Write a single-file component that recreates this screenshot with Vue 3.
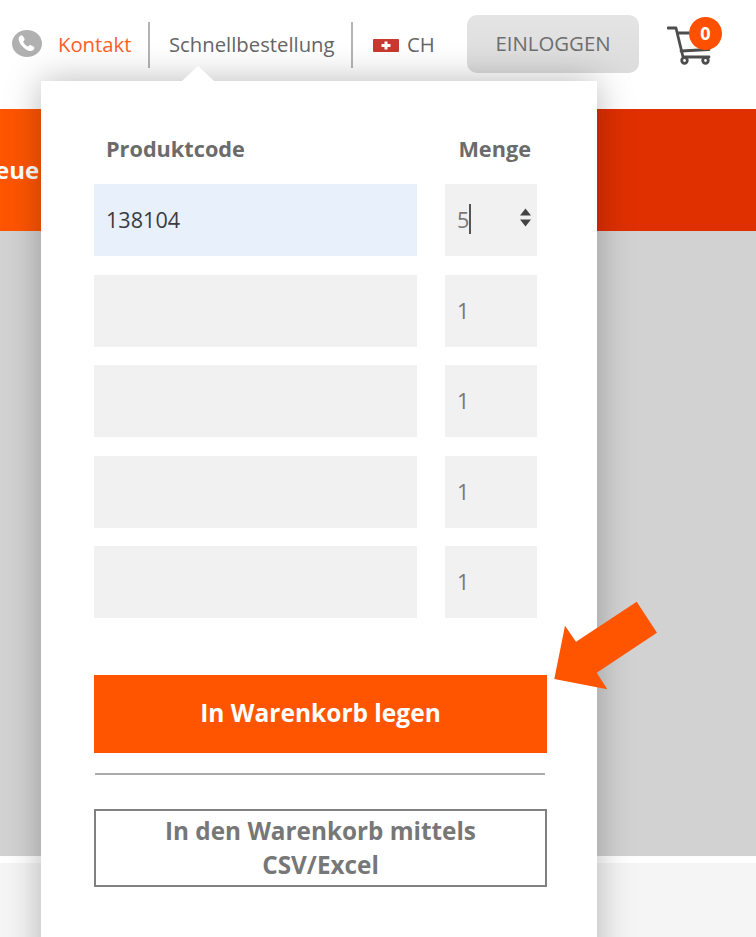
<script setup>
const rows = [
  { code: '138104', qty: '5', active: true },
  { code: '', qty: '1' },
  { code: '', qty: '1' },
  { code: '', qty: '1' },
  { code: '', qty: '1' }
]
</script>

<template>
  <div class="page">
    <header class="top">
      <svg class="phone" viewBox="0 0 30 27" width="30" height="27">
        <ellipse cx="15" cy="13.5" rx="15" ry="13.5" fill="#b0b0b0" />
        <path d="M7.5 6.5c1-1.2 2.6-1.6 3.4-.6l1.6 2.8c.4.8 0 1.4-.9 2.2-.5.4-.5.8-.2 1.4.9 1.6 2.2 3 3.9 4 .6.3 1 .3 1.400-.2.8-.9 1.4-1.3 2.2-.9l3 1.6c.9.7.6 2.2-.6 3.3-1.5 1.3-3.7 1.3-6 .1-3.3-1.7-6.2-4.7-7.8-8-1.1-2.3-1.200-4.400 0-5.700z" fill="#fff" />
      </svg>
      <a class="kontakt">Kontakt</a>
      <span class="sep sep-a"></span>
      <a class="quick">Schnellbestellung</a>
      <span class="sep sep-b"></span>
      <svg class="flag" viewBox="0 0 26 13" width="26" height="13">
        <rect width="26" height="13" rx="1" fill="#c8392f" />
        <path d="M11.5 2.500h3V5h3v3h-3v2.500h-3V8h-3V5h3z" fill="#fff" />
      </svg>
      <span class="lang">CH</span>
      <button class="login">EINLOGGEN</button>
      <div class="cart">
        <svg viewBox="0 0 46 40" width="46" height="40">
          <g fill="none" stroke="#4d4d4d" stroke-linecap="round" stroke-linejoin="round">
            <path d="M1 2h8l7 29h26" stroke-width="2.800" />
            <path d="M11 7h22" stroke-width="2.800" />
            <path d="M14 25l28-1.500" stroke-width="2.800" />
            <circle cx="17.500" cy="34.500" r="2.800" stroke-width="2.800" />
            <circle cx="38.500" cy="34.500" r="2.800" stroke-width="2.800" />
          </g>
        </svg>
        <span class="badge">0</span>
      </div>
    </header>

    <section class="band">
      <span class="band-text">eue</span>
    </section>
    <section class="grey"></section>
    <footer class="foot"></footer>

    <div class="panel">
      <span class="caret"></span>
      <div class="heads">
        <span>Produktcode</span>
        <span>Menge</span>
      </div>
      <div class="rows">
        <div v-for="(row, i) in rows" :key="i" class="row">
          <div class="code" :class="{ active: row.active }">{{ row.code }}</div>
          <div class="qty">
            <span>{{ row.qty }}</span>
            <template v-if="row.active">
              <span class="caret-line"></span>
              <svg class="spin" viewBox="0 0 13 21" width="13" height="21">
                <path d="M6.500 1.500l5.500 7H1zM1 12.500h11l-5.500 7z" fill="#444" />
              </svg>
            </template>
          </div>
        </div>
      </div>
      <button class="add">In Warenkorb legen</button>
      <hr class="rule" />
      <button class="csv">In den Warenkorb mittels<br />CSV/Excel</button>
    </div>

    <svg class="arrow" viewBox="0 0 110 96" width="110" height="96">
      <polygon points="2.300,78 13,24.700 24,40.700 84.700,0.700 105,31.700 44.700,71.700 55.300,88.300" fill="#ff5500" />
    </svg>
  </div>
</template>

<style>
html, body { margin: 0; background: #fff; }
</style>

<style scoped>
.page {
  position: relative;
  width: 756px;
  height: 937px;
  overflow: hidden;
  font-family: "Open Sans", "Noto Sans", sans-serif;
  color: #666;
}
.top {
  height: 110px;
  box-sizing: border-box;
  padding: 15px 0 0 12px;
  display: flex;
  align-items: flex-start;
  background: #fff;
}
.phone { margin-top: 15px; }
.kontakt {
  margin-left: 16px;
  margin-top: 15px;
  width: 73px;
  color: #ff6026;
  font-size: 20.300px;
  line-height: 28px;
  white-space: nowrap;
}
.sep {
  width: 2px;
  height: 46px;
  margin-top: 7px;
  background: #b4b4b4;
}
.sep-a { margin-left: 17px; }
.quick {
  margin-left: 19px;
  margin-top: 15px;
  width: 166px;
  font-size: 20.300px;
  line-height: 28px;
  white-space: nowrap;
}
.sep-b { margin-left: 16px; }
.flag { margin-left: 20px; margin-top: 24px; }
.lang {
  margin-left: 8px;
  margin-top: 15px;
  width: 27px;
  font-size: 20.300px;
  line-height: 28px;
}
.login {
  flex: none;
  margin-left: 33px;
  width: 172px;
  height: 58px;
  padding: 0 0 2px;
  border: 0;
  border-radius: 10px;
  background: linear-gradient(#e4e4e4, #dcdcdc);
  color: #6e6e6e;
  font: 20.400px "Open Sans", sans-serif;
}
.cart {
  position: relative;
  flex: none;
  margin-left: 28px;
  margin-top: 11px;
  width: 46px;
  height: 40px;
}
.badge {
  position: absolute;
  left: 22px;
  top: -9px;
  width: 33px;
  height: 33px;
  border-radius: 50%;
  background: #ff5000;
  color: #fff;
  font-size: 18px;
  font-weight: 700;
  line-height: 33px;
  text-align: center;
}
.band {
  height: 122px;
  margin-top: -1px;
  padding-bottom: 1px;
  box-sizing: border-box;
  display: flex;
  align-items: center;
  background: linear-gradient(90deg, #ff5500 0, #ff5500 41px, #e03000 597px, #e03000 100%);
}
.band-text {
  margin-left: -5px;
  color: #fff;
  font-size: 24px;
  font-weight: 700;
}
.grey { height: 625px; background: #d2d2d2; }
.foot {
  height: 81px;
  border-top: 7px solid #fff;
  box-sizing: border-box;
  background: #f5f5f5;
}
.panel {
  position: absolute;
  left: 41px;
  top: 81px;
  width: 556px;
  height: 900px;
  box-sizing: border-box;
  padding: 52px 50px 0 53px;
  background: #fff;
  box-shadow: 0 0 34px rgba(0, 0, 0, 0.28);
}
.caret {
  position: absolute;
  left: 141px;
  top: -15px;
  width: 0;
  height: 0;
  border-left: 16px solid transparent;
  border-right: 16px solid transparent;
  border-bottom: 15px solid #fff;
}
.heads {
  display: flex;
  justify-content: space-between;
  height: 33px;
  margin-right: 10px;
  padding: 0 6px 0 12px;
  font-size: 21.700px;
  font-weight: 700;
  line-height: 32px;
  color: #6b6b6b;
}
.rows {
  display: flex;
  flex-direction: column;
  gap: 18.500px;
  margin-top: 18px;
  margin-right: 10px;
}
.row {
  display: flex;
  justify-content: space-between;
  height: 72px;
}
.code, .qty {
  box-sizing: border-box;
  background: #f1f1f1;
  font-size: 21.600px;
  line-height: 72px;
  padding-left: 12px;
}
.code { width: 323px; color: #3c3c3c; }
.code.active { background: #e8f0fc; }
.qty {
  position: relative;
  width: 92px;
  color: #777;
}
.caret-line {
  position: absolute;
  left: 24px;
  top: 20px;
  width: 1.500px;
  height: 30px;
  background: #555;
}
.spin {
  position: absolute;
  left: 74px;
  top: 23px;
}
.add {
  display: block;
  width: 453px;
  height: 78px;
  margin-top: 57px;
  padding: 0 0 3px;
  border: 0;
  background: #ff5500;
  color: #fff;
  font: 700 24.500px "Open Sans", sans-serif;
}
.rule {
  width: 450px;
  height: 2px;
  margin: 20px 0 0 1px;
  border: 0;
  background: #aaa;
}
.csv {
  display: block;
  box-sizing: border-box;
  width: 453px;
  height: 78px;
  margin-top: 34px;
  border: 2px solid #808080;
  background: #fff;
  color: #777;
  font: 700 24.300px/34px "Open Sans", sans-serif;
}
.arrow {
  position: absolute;
  left: 552px;
  top: 601px;
}
</style>
